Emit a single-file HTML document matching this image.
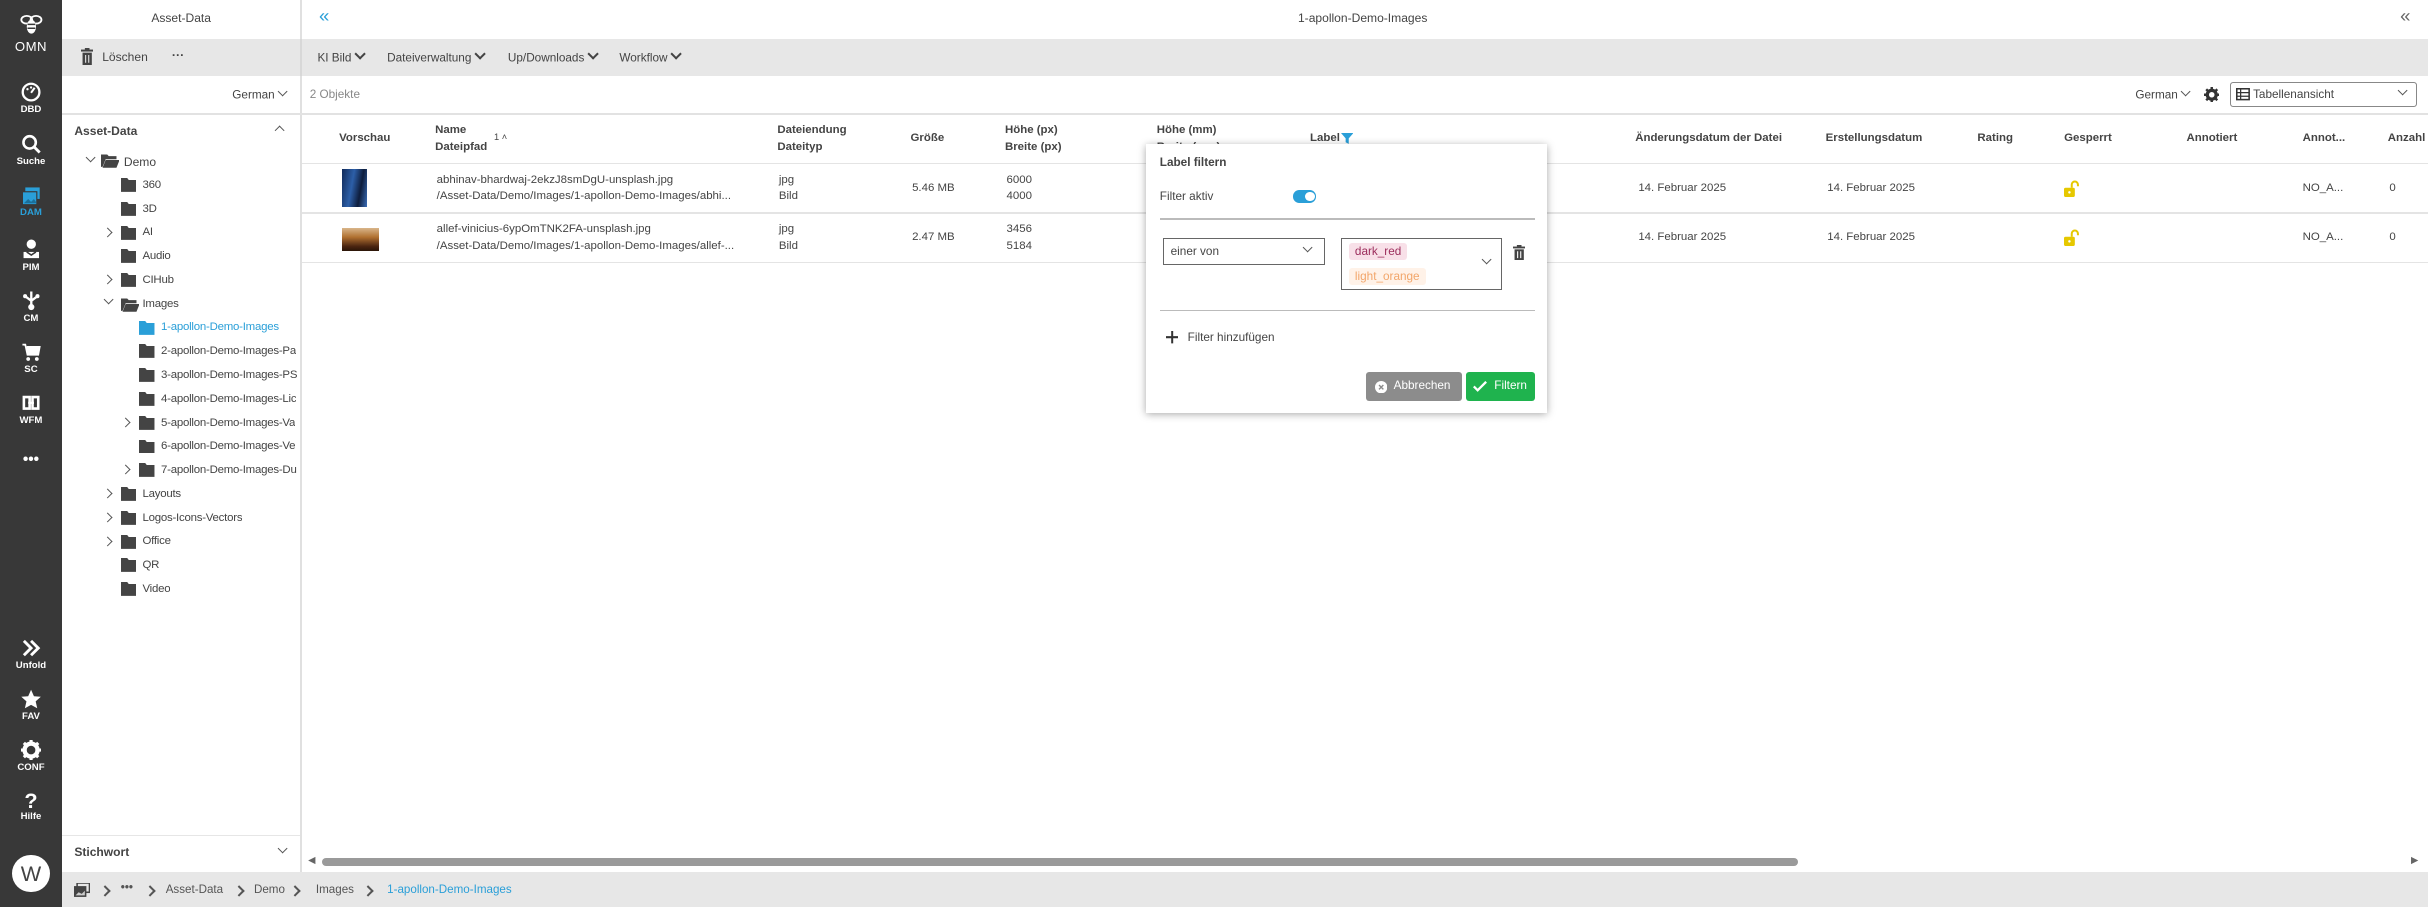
<!DOCTYPE html>
<html><head><meta charset="utf-8">
<style>
html,body{margin:0;padding:0;overflow:hidden;background:#fff;}
#w{zoom:1.5485;width:1568px;height:586px;position:relative;font-family:"Liberation Sans",Arial,sans-serif;font-size:8px;color:#333;overflow:hidden;}
.a{position:absolute;white-space:nowrap;}
.sb{position:absolute;left:0;top:0;width:40px;height:586px;background:#383838;}
.ic{position:absolute;left:0;width:40px;text-align:center;color:#fff;font-size:6.2px;font-weight:bold;}
.ic svg{display:block;margin:0 auto 1px;}
.hd{font-weight:bold;color:#444;font-size:7.4px;line-height:11px;}
.cell{font-size:7.4px;color:#444;line-height:10.5px;}
.line{position:absolute;height:1px;background:#e4e4e4;}
.v{display:inline-block;width:4px;height:4px;border-right:1.3px solid #444;border-bottom:1.3px solid #444;transform:rotate(45deg);margin:0 0 2px 3px;}
.vt{display:inline-block;width:4px;height:4px;border-right:1px solid #555;border-bottom:1px solid #555;transform:rotate(45deg);margin:0 0 2px 3px;}
.bc{position:absolute;top:570px;font-size:7.5px;color:#555;white-space:nowrap;}
.bcc{position:absolute;top:573px;width:4px;height:4px;border-right:1.3px solid #555;border-top:1.3px solid #555;transform:rotate(45deg);}
</style></head><body><div id="w">

<div class="sb">
 <div class="ic" style="top:8px;font-size:8.5px;font-weight:normal;letter-spacing:.3px">
  <svg width="16" height="16" viewBox="0 0 16 16"><ellipse cx="5" cy="5" rx="3.5" ry="2.5" fill="none" stroke="#fff" stroke-width="1.2"/><ellipse cx="11" cy="5" rx="3.5" ry="2.5" fill="none" stroke="#fff" stroke-width="1.2"/><ellipse cx="8" cy="9.5" rx="3" ry="4.5" fill="#fff"/><path d="M5.5 8h5M5.5 10.5h5" stroke="#383838" stroke-width=".9"/></svg>OMN</div>
 <div class="ic" style="top:53px"><svg width="13" height="13" viewBox="0 0 14 14"><circle cx="7" cy="7" r="5.8" fill="none" stroke="#fff" stroke-width="1.6"/><path d="M7 7.5L9.5 4" stroke="#fff" stroke-width="1.4"/><circle cx="4.5" cy="5" r=".8" fill="#fff"/><circle cx="7" cy="3.8" r=".8" fill="#fff"/></svg>DBD</div>
 <div class="ic" style="top:86px"><svg width="13" height="14" viewBox="0 0 14 14"><circle cx="6" cy="6" r="4.3" fill="none" stroke="#fff" stroke-width="1.8"/><path d="M9 9l4 4" stroke="#fff" stroke-width="2"/></svg>Suche</div>
 <div class="ic" style="top:120px;color:#2a9fd8"><svg width="13" height="13" viewBox="0 0 14 14"><rect x="3" y="1" width="10" height="8" fill="#2a9fd8"/><rect x="1" y="4" width="10" height="9" fill="#2a9fd8" stroke="#383838" stroke-width=".8"/><path d="M2 12l3-3 2 2 2-2 2 3z" fill="#1b6f99"/></svg>DAM</div>
 <div class="ic" style="top:154px"><svg width="12" height="14" viewBox="0 0 12 14"><circle cx="6" cy="4" r="3" fill="#fff"/><path d="M1 9h10v4H1z" fill="#fff"/><path d="M3 9l3 2 3-2" stroke="#383838" fill="none"/></svg>PIM</div>
 <div class="ic" style="top:187px"><svg width="12" height="14" viewBox="0 0 12 14"><path d="M6 1v10M2 4l4 3 4-3" stroke="#fff" stroke-width="1.5" fill="none"/><circle cx="6" cy="11" r="2" fill="#fff"/><circle cx="2" cy="4" r="1.3" fill="#fff"/><circle cx="10" cy="4" r="1.3" fill="#fff"/></svg>CM</div>
 <div class="ic" style="top:220px"><svg width="13" height="14" viewBox="0 0 14 14"><path d="M1 2h2l1.5 7h7.5l1-5.5H4" fill="#fff" stroke="#fff" stroke-width="1.2"/><circle cx="5" cy="12" r="1.3" fill="#fff"/><circle cx="11" cy="12" r="1.3" fill="#fff"/></svg>SC</div>
 <div class="ic" style="top:253px"><svg width="13" height="14" viewBox="0 0 14 14"><path d="M2 3h4v8H2zM8 3h4v8H8z" fill="none" stroke="#fff" stroke-width="1.8"/><path d="M5 7h4" stroke="#fff" stroke-width="1.5"/></svg>WFM</div>
 <div class="ic" style="top:291px;font-size:10px">•••</div>
 <div class="ic" style="top:412px"><svg width="13" height="13" viewBox="0 0 14 14"><path d="M2 2l5 5-5 5M7 2l5 5-5 5" stroke="#fff" stroke-width="2" fill="none"/></svg>Unfold</div>
 <div class="ic" style="top:445px"><svg width="13" height="13" viewBox="0 0 14 14"><path d="M7 .5l2 4.5 4.8.4-3.6 3.2 1.1 4.8L7 11 2.7 13.4l1.1-4.8L.2 5.4 5 5z" fill="#fff"/></svg>FAV</div>
 <div class="ic" style="top:478px"><svg width="13" height="13" viewBox="0 0 14 14"><circle cx="7" cy="7" r="4.5" fill="none" stroke="#fff" stroke-width="3"/><path d="M7 0v3M7 11v3M0 7h3M11 7h3M2 2l2 2M10 10l2 2M12 2l-2 2M2 12l2-2" stroke="#fff" stroke-width="2.2"/></svg>CONF</div>
 <div class="ic" style="top:510px;font-size:6.2px"><div style="font-size:14px;line-height:14px">?</div>Hilfe</div>
 <div style="position:absolute;left:8px;top:552px;width:24px;height:24px;border-radius:50%;background:#fff;color:#444;font-size:14px;text-align:center;line-height:24px">W</div>
</div>

<div class="a" style="left:40px;width:154px;top:7px;text-align:center;font-size:7.8px;color:#444">Asset-Data</div>
<div style="position:absolute;left:194px;top:0;width:1px;height:563px;background:#e0e0e0"></div>
<div class="a" style="left:206px;top:3px;font-size:12px;color:#2a9fd8">«</div>
<div class="a" style="left:780px;width:200px;text-align:center;top:7px;font-size:7.8px;color:#444">1-apollon-Demo-Images</div>
<div class="a" style="left:1550px;top:3px;font-size:12px;color:#666">«</div>

<div style="position:absolute;left:40px;top:25px;width:1528px;height:24px;background:#e7e7e7"></div>
<div style="position:absolute;left:194px;top:25px;width:1px;height:24px;background:#d8d8d8"></div>
<svg class="a" style="left:52px;top:31px" width="8" height="11" viewBox="0 0 8 11"><rect x="0" y="1" width="8" height="1.3" fill="#444"/><rect x="2.5" y="0" width="3" height="1.3" fill="#444"/><rect x="1" y="3" width="6" height="8" fill="#444"/><path d="M3 4.5v5M5 4.5v5" stroke="#e7e7e7" stroke-width=".7"/></svg>
<div class="a" style="left:66px;top:32px;color:#444;font-size:7.8px">Löschen</div>
<div class="a" style="left:111px;top:31px;color:#444;font-weight:bold">···</div>
<div class="a" style="left:205px;top:32px;color:#444;font-size:7.6px">KI Bild<span class="v"></span></div>
<div class="a" style="left:250px;top:32px;color:#444;font-size:7.6px">Dateiverwaltung<span class="v"></span></div>
<div class="a" style="left:328px;top:32px;color:#444;font-size:7.6px">Up/Downloads<span class="v"></span></div>
<div class="a" style="left:400px;top:32px;color:#444;font-size:7.6px">Workflow<span class="v"></span></div>

<div class="a" style="left:150px;top:57px;color:#444;font-size:7.6px">German<span class="vt"></span></div>
<div class="a" style="left:200px;top:57px;color:#888;font-size:7.6px">2 Objekte</div>
<div class="a" style="left:1379px;top:57px;color:#444;font-size:7.6px">German<span class="vt"></span></div>
<svg class="a" style="left:1423px;top:56px" width="10" height="10" viewBox="0 0 14 14"><circle cx="7" cy="7" r="4" fill="none" stroke="#333" stroke-width="3"/><path d="M7 0v3M7 11v3M0 7h3M11 7h3M2 2l2 2M10 10l2 2M12 2l-2 2M2 12l2-2" stroke="#333" stroke-width="2.2"/></svg>
<div style="position:absolute;left:1440px;top:53px;width:121px;height:16px;border:1px solid #888;border-radius:2px;box-sizing:border-box"></div>
<svg class="a" style="left:1444px;top:57px" width="9" height="8" viewBox="0 0 9 8"><rect x=".5" y=".5" width="8" height="7" fill="none" stroke="#333"/><path d="M.5 3h8M.5 5.3h8M3 .5v7" stroke="#333" stroke-width=".8"/></svg>
<div class="a" style="left:1455px;top:57px;color:#444;font-size:7.6px">Tabellenansicht</div>
<div class="a" style="left:1546px;top:56px"><span class="vt"></span></div>
<div class="line" style="left:40px;top:73px;width:1528px;background:#e2e2e2"></div>

<div class="a" style="left:48px;top:80px;font-weight:bold;color:#444;font-size:7.8px">Asset-Data</div>
<div class="a" style="left:178px;top:82px;width:4px;height:4px;border-left:1.2px solid #555;border-top:1.2px solid #555;transform:rotate(45deg)"></div>
<div class="a" style="left:53px;top:99px"><span class="vt"></span></div>
<svg class="a" style="left:65px;top:99px" width="12" height="10" viewBox="0 0 12 10"><path d="M0 1h4l1 1h5v2H3L1 9H0z" fill="#444"/><path d="M3 4.5h9L10 9.5H1z" fill="#444"/></svg>
<div class="a" style="left:80px;top:100px;font-size:7.8px;color:#444">Demo</div>
<div id="tree2"></div>

<div class="a hd" style="left:219px;top:84px">Vorschau</div>
<div class="a hd" style="left:281px;top:79px">Name<br>Dateipfad</div>
<div class="a" style="left:319px;top:85px;font-size:6px;color:#444">1 ˄</div>
<div class="a hd" style="left:502px;top:79px">Dateiendung<br>Dateityp</div>
<div class="a hd" style="left:588px;top:84px">Größe</div>
<div class="a hd" style="left:649px;top:79px">Höhe (px)<br>Breite (px)</div>
<div class="a hd" style="left:747px;top:79px">Höhe (mm)<br>Breite (mm)</div>
<div class="a hd" style="left:846px;top:84px">Label</div>
<svg class="a" style="left:866px;top:86px" width="8" height="7" viewBox="0 0 8 7"><path d="M0 0h8L5 3.5V7L3 6V3.5z" fill="#2a9fd8"/></svg>
<div class="a hd" style="left:1056px;top:84px">Änderungsdatum der Datei</div>
<div class="a hd" style="left:1179px;top:84px">Erstellungsdatum</div>
<div class="a hd" style="left:1277px;top:84px">Rating</div>
<div class="a hd" style="left:1333px;top:84px">Gesperrt</div>
<div class="a hd" style="left:1412px;top:84px">Annotiert</div>
<div class="a hd" style="left:1487px;top:84px">Annot...</div>
<div class="a hd" style="left:1542px;top:84px">Anzahl</div>
<div class="line" style="left:195px;top:105px;width:1373px"></div>
<div class="line" style="left:195px;top:137px;width:1373px"></div>
<div class="line" style="left:195px;top:169px;width:1373px"></div>

<div style="position:absolute;left:221px;top:109px;width:16px;height:25px;background:linear-gradient(100deg,#102a5a,#2d5fa8 40%,#0e1d3c 70%,#3a6db8)"></div>
<div class="a cell" style="left:282px;top:111px">abhinav-bhardwaj-2ekzJ8smDgU-unsplash.jpg<br>/Asset-Data/Demo/Images/1-apollon-Demo-Images/abhi...</div>
<div class="a cell" style="left:503px;top:111px">jpg<br>Bild</div>
<div class="a cell" style="left:589px;top:116px">5.46 MB</div>
<div class="a cell" style="left:650px;top:111px">6000<br>4000</div>
<div class="a cell" style="left:1058px;top:116px">14. Februar 2025</div>
<div class="a cell" style="left:1180px;top:116px">14. Februar 2025</div>
<div class="a cell" style="left:1487px;top:116px">NO_A...</div>
<div class="a cell" style="left:1543px;top:116px">0</div>
<div style="position:absolute;left:221px;top:147px;width:24px;height:15px;background:linear-gradient(180deg,#d9b58a,#b07030 40%,#4a2410 80%,#2a1508)"></div>
<div class="a cell" style="left:282px;top:143px">allef-vinicius-6ypOmTNK2FA-unsplash.jpg<br>/Asset-Data/Demo/Images/1-apollon-Demo-Images/allef-...</div>
<div class="a cell" style="left:503px;top:143px">jpg<br>Bild</div>
<div class="a cell" style="left:589px;top:148px">2.47 MB</div>
<div class="a cell" style="left:650px;top:143px">3456<br>5184</div>
<div class="a cell" style="left:1058px;top:148px">14. Februar 2025</div>
<div class="a cell" style="left:1180px;top:148px">14. Februar 2025</div>
<div class="a cell" style="left:1487px;top:148px">NO_A...</div>
<div class="a cell" style="left:1543px;top:148px">0</div>
<svg class="a" style="left:1333px;top:116px" width="10" height="11" viewBox="0 0 10 11"><path d="M5 5V3a2 2 0 0 1 4 0v1" fill="none" stroke="#e6c800" stroke-width="1.3"/><rect x="0" y="5" width="7" height="6" rx="1" fill="#e6c800"/><circle cx="3.5" cy="8" r=".8" fill="#fff"/></svg>
<svg class="a" style="left:1333px;top:148px" width="10" height="11" viewBox="0 0 10 11"><path d="M5 5V3a2 2 0 0 1 4 0v1" fill="none" stroke="#e6c800" stroke-width="1.3"/><rect x="0" y="5" width="7" height="6" rx="1" fill="#e6c800"/><circle cx="3.5" cy="8" r=".8" fill="#fff"/></svg>

<div class="line" style="left:40px;top:539px;width:154px;background:#e6e6e6"></div>
<div class="a" style="left:48px;top:546px;font-weight:bold;color:#444;font-size:7.8px">Stichwort</div>
<div class="a" style="left:177px;top:545px"><span class="vt"></span></div>

<div class="a" style="left:199px;top:552px;font-size:6px;color:#666">◀</div>
<div style="position:absolute;left:208px;top:554px;width:953px;height:5px;border-radius:3px;background:#9a9a9a"></div>
<div class="a" style="left:1557px;top:552px;font-size:6px;color:#666">▶</div>

<div style="position:absolute;left:40px;top:563px;width:1528px;height:23px;background:#e7e7e7"></div>
<svg class="a" style="left:48px;top:570px" width="10" height="9" viewBox="0 0 10 9"><rect x="2" y="0" width="8" height="6" fill="none" stroke="#444"/><rect x="0" y="2" width="8" height="7" fill="#444"/><path d="M1 8l2-2 2 1 2-2v3z" fill="#ccc"/></svg>
<div class="bcc" style="left:65px"></div>
<div class="bc" style="left:78px;font-weight:bold;top:569px">•••</div>
<div class="bcc" style="left:94px"></div>
<div class="bc" style="left:107px">Asset-Data</div>
<div class="bcc" style="left:152px"></div>
<div class="bc" style="left:164px">Demo</div>
<div class="bcc" style="left:188px"></div>
<div class="bc" style="left:204px">Images</div>
<div class="bcc" style="left:235px"></div>
<div class="bc" style="left:250px;color:#2a9fd8">1-apollon-Demo-Images</div>

<div style="position:absolute;left:740px;top:93px;width:259px;height:174px;background:#fff;box-shadow:0 1px 5px rgba(0,0,0,.35)">
 <div class="a" style="left:9px;top:8px;font-weight:bold;color:#444;font-size:7.6px">Label filtern</div>
 <div class="a" style="left:9px;top:30px;color:#444;font-size:7.6px">Filter aktiv</div>
 <div style="position:absolute;left:95px;top:30px;width:15px;height:8px;border-radius:4px;background:#2a9fd8"></div>
 <div style="position:absolute;left:103px;top:31px;width:6px;height:6px;border-radius:50%;background:#fff"></div>
 <div class="line" style="left:9px;top:48px;width:242px;background:#bbb"></div>
 <div style="position:absolute;left:11px;top:61px;width:105px;height:17px;border:1px solid #666;box-sizing:border-box"></div>
 <div class="a" style="left:16px;top:65px;color:#444;font-size:7.6px">einer von</div>
 <div class="a" style="left:99px;top:64px"><span class="vt"></span></div>
 <div style="position:absolute;left:126px;top:61px;width:104px;height:33px;border:1px solid #666;box-sizing:border-box"></div>
 <div class="a" style="left:131px;top:64px;height:11px;line-height:11px;padding:0 4px;background:#f8e0e8;color:#9c2d5c;border-radius:2px;font-size:7.6px">dark_red</div>
 <div class="a" style="left:131px;top:80px;height:11px;line-height:11px;padding:0 4px;background:#fff2e8;color:#f2a66a;border-radius:2px;font-size:7.6px">light_orange</div>
 <div class="a" style="left:215px;top:72px"><span class="vt"></span></div>
 <svg class="a" style="left:237px;top:65px" width="8" height="10" viewBox="0 0 8 10"><rect x="0" y="1" width="8" height="1.2" fill="#444"/><rect x="2.5" y="0" width="3" height="1.2" fill="#444"/><rect x="1" y="2.8" width="6" height="7" fill="#444"/><path d="M3 4v4.5M5 4v4.5" stroke="#fff" stroke-width=".7"/></svg>
 <div class="line" style="left:9px;top:107px;width:242px;background:#bbb"></div>
 <svg class="a" style="left:13px;top:121px" width="8" height="8" viewBox="0 0 8 8"><path d="M4 0v8M0 4h8" stroke="#333" stroke-width="1.3"/></svg>
 <div class="a" style="left:27px;top:121px;color:#444;font-size:7.6px">Filter hinzufügen</div>
 <div style="position:absolute;left:142px;top:147px;width:62px;height:19px;background:#8c8c8c;border-radius:2px"></div>
 <svg class="a" style="left:148px;top:153px" width="8" height="8" viewBox="0 0 8 8"><circle cx="4" cy="4" r="4" fill="#fff"/><path d="M2.6 2.6l2.8 2.8M5.4 2.6L2.6 5.4" stroke="#8c8c8c" stroke-width=".9"/></svg>
 <div class="a" style="left:160px;top:152px;color:#fff;font-size:7.6px">Abbrechen</div>
 <div style="position:absolute;left:207px;top:147px;width:44px;height:19px;background:#1fb34e;border-radius:2px"></div>
 <svg class="a" style="left:211px;top:153px" width="9" height="7" viewBox="0 0 9 7"><path d="M.5 3.5l2.5 2.5L8.5.5" stroke="#fff" stroke-width="1.5" fill="none"/></svg>
 <div class="a" style="left:225px;top:152px;color:#fff;font-size:7.6px">Filtern</div>
</div>

</div>
<script>
var items=[[3,"360",0,0],[3,"3D",0,0],[3,"AI",1,0],[3,"Audio",0,0],[3,"CIHub",1,0],[3,"Images",2,1],
[4,"1-apollon-Demo-Images",0,2],[4,"2-apollon-Demo-Images-Pa",0,0],[4,"3-apollon-Demo-Images-PS",0,0],[4,"4-apollon-Demo-Images-Lic",0,0],
[4,"5-apollon-Demo-Images-Va",1,0],[4,"6-apollon-Demo-Images-Ve",0,0],[4,"7-apollon-Demo-Images-Du",1,0],
[3,"Layouts",1,0],[3,"Logos-Icons-Vectors",1,0],[3,"Office",1,0],[3,"QR",0,0],[3,"Video",0,0]];
var h="";
items.forEach(function(it,i){var y=115+i*15.35;var lv=it[0];var fx=lv==3?78:90;var cx=fx-12;
if(it[2]==1)h+='<div class="a" style="left:'+(cx+1)+'px;top:'+(y+2)+'px;width:4px;height:4px;border-right:1.1px solid #555;border-top:1.1px solid #555;transform:rotate(45deg)"></div>';
if(it[2]==2)h+='<div class="a" style="left:'+(cx-1)+'px;top:'+(y-1)+'px"><span class="vt"></span></div>';
var col=it[3]==2?"#2a9fd8":"#444";
if(it[3]==1)h+='<svg class="a" style="left:'+fx+'px;top:'+(y)+'px" width="12" height="10" viewBox="0 0 12 10"><path d="M0 1h4l1 1h5v2H3L1 9H0z" fill="#444"/><path d="M3 4.5h9L10 9.5H1z" fill="#444"/></svg>';
else h+='<svg class="a" style="left:'+fx+'px;top:'+(y)+'px" width="10" height="9" viewBox="0 0 10 9"><path d="M0 0h4l1 1.3h5V9H0z" fill="'+col+'"/></svg>';
h+='<div class="a" style="left:'+(fx+14)+'px;top:'+(y+0.5)+'px;font-size:7.4px;letter-spacing:-0.15px;color:'+col+';max-width:'+(194-fx-14)+'px;overflow:hidden">'+it[1]+'</div>';});
document.getElementById("tree2").innerHTML=h;
</script>
</body></html>
